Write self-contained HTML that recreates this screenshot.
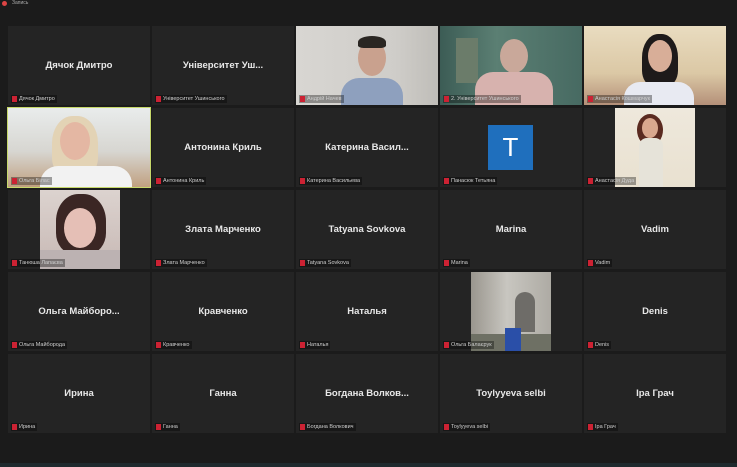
<!DOCTYPE html>
<html><head><meta charset="utf-8"><style>
*{margin:0;padding:0;box-sizing:border-box}
body{width:737px;height:467px;background:#1b1b1b;position:relative;overflow:hidden;font-family:"Liberation Sans","DejaVu Sans",sans-serif}
.t{position:absolute;width:142px;height:79px;background:#242424;overflow:hidden}
.n{position:absolute;left:0;right:0;top:34px;text-align:center;color:#e8e8e8;font-weight:bold;font-size:9.5px;white-space:nowrap}
.l{position:absolute;left:3px;bottom:2px;color:#cfcfcf;font-size:5.5px;white-space:nowrap;padding:1px 2px 1px 8px;background:rgba(0,0,0,.35)}
.l:before{content:"";position:absolute;left:1px;top:1px;width:5px;height:6px;background:#c23}
.v{position:absolute;top:0;bottom:0}
.head{position:absolute;border-radius:50%}
</style></head><body>
<div style="position:absolute;left:2px;top:1px;width:5px;height:5px;border-radius:50%;background:#d44"></div>
<div style="position:absolute;left:12px;top:0px;color:#aaa;font-size:5px">Запись</div>

<!-- row1 -->
<div class="t" style="left:8px;top:26px"><div class="n">Дячок Дмитро</div><div class="l">Дячок Дмитро</div></div>
<div class="t" style="left:152px;top:26px"><div class="n">Університет Уш...</div><div class="l">Університет Ушинського</div></div>
<div class="t" style="left:296px;top:26px;background:linear-gradient(90deg,#d8d6d2,#cfcdc9 70%,#bfbdb8)">
 <div class="head" style="left:62px;top:14px;width:28px;height:36px;background:#c9a18e"></div>
 <div class="head" style="left:62px;top:10px;width:28px;height:12px;background:#2a2622;border-radius:50% 50% 20% 20%"></div>
 <div style="position:absolute;left:45px;top:52px;width:62px;height:30px;background:#8ea0be;border-radius:18px 18px 0 0"></div>
 <div class="l">Андрій Начев</div></div>
<div class="t" style="left:440px;top:26px;background:linear-gradient(90deg,#3c5c55,#5b7f73 40%,#476a62)">
 <div style="position:absolute;left:16px;top:12px;width:22px;height:45px;background:#6b7c6a"></div>
 <div class="head" style="left:60px;top:13px;width:28px;height:34px;background:#c9a89a"></div>
 <div style="position:absolute;left:35px;top:46px;width:78px;height:36px;background:#d7b2ae;border-radius:18px 18px 0 0"></div>
 <div class="l">2. Університет Ушинського</div></div>
<div class="t" style="left:584px;top:26px;background:linear-gradient(180deg,#e9dcc0,#dbc8a5 60%,#b49079)">
 <div class="head" style="left:58px;top:8px;width:36px;height:52px;background:#1e1a1a;border-radius:45% 45% 30% 30%"></div>
 <div class="head" style="left:64px;top:14px;width:24px;height:32px;background:#d8ae98"></div>
 <div style="position:absolute;left:40px;top:56px;width:70px;height:26px;background:#e8eaf2;border-radius:16px 16px 0 0"></div>
 <div class="l">Анастасія Кошмарчук</div></div>

<!-- row2 -->
<div class="t" style="left:7px;top:107px;width:144px;height:81px;border:1.5px solid #c6d86a;background:linear-gradient(180deg,#e9ecec,#d7d6d1 55%,#c0a080)">
 <div class="head" style="left:44px;top:8px;width:46px;height:60px;background:#e3d3b5;border-radius:45% 45% 30% 30%"></div>
 <div class="head" style="left:52px;top:14px;width:30px;height:38px;background:#e4b7a3"></div>
 <div style="position:absolute;left:32px;top:58px;width:92px;height:26px;background:#f2f2f2;border-radius:18px 18px 0 0"></div>
 <div class="l">Ольга Білас</div></div>
<div class="t" style="left:152px;top:108px"><div class="n">Антонина Криль</div><div class="l">Антонина Криль</div></div>
<div class="t" style="left:296px;top:108px"><div class="n">Катерина Васил...</div><div class="l">Катерина Васильева</div></div>
<div class="t" style="left:440px;top:108px"><div style="position:absolute;left:48px;top:17px;width:45px;height:45px;background:#1f6fbd;color:#fff;font-size:26px;text-align:center;line-height:45px">T</div><div class="l">Панасюк Тетьяна</div></div>
<div class="t" style="left:584px;top:108px">
 <div class="v" style="left:31px;width:80px;background:linear-gradient(180deg,#eee8dc,#e9e1d0)">
  <div class="head" style="left:22px;top:6px;width:26px;height:32px;background:#5a2a20"></div>
  <div class="head" style="left:27px;top:10px;width:16px;height:20px;background:#d9a78e"></div>
  <div style="position:absolute;left:24px;top:30px;width:24px;height:50px;background:#e6e3d9;border-radius:8px 8px 0 0"></div>
 </div><div class="l">Анастасія Дуда</div></div>

<!-- row3 -->
<div class="t" style="left:8px;top:190px">
 <div class="v" style="left:32px;width:80px;background:linear-gradient(180deg,#dcd3cf,#c7b8b4)">
  <div class="head" style="left:16px;top:4px;width:50px;height:60px;background:#3b2624;border-radius:45% 45% 35% 35%"></div>
  <div class="head" style="left:24px;top:18px;width:32px;height:40px;background:#e5bfb6"></div>
  <div style="position:absolute;left:0;top:60px;width:80px;height:20px;background:#bcb2b2"></div>
 </div><div class="l">Танюша Лапаєва</div></div>
<div class="t" style="left:152px;top:190px"><div class="n">Злата Марченко</div><div class="l">Злата Марченко</div></div>
<div class="t" style="left:296px;top:190px"><div class="n">Tatyana Sovkova</div><div class="l">Tatyana Sovkova</div></div>
<div class="t" style="left:440px;top:190px"><div class="n">Marina</div><div class="l">Marina</div></div>
<div class="t" style="left:584px;top:190px"><div class="n">Vadim</div><div class="l">Vadim</div></div>

<!-- row4 -->
<div class="t" style="left:8px;top:272px"><div class="n">Ольга Майборо...</div><div class="l">Ольга Майборода</div></div>
<div class="t" style="left:152px;top:272px"><div class="n">Кравченко</div><div class="l">Кравченко</div></div>
<div class="t" style="left:296px;top:272px"><div class="n">Наталья</div><div class="l">Наталья</div></div>
<div class="t" style="left:440px;top:272px">
 <div class="v" style="left:31px;width:80px;background:linear-gradient(90deg,#9a968e,#c8c6c0 45%,#aeaba4)">
  <div style="position:absolute;left:44px;top:20px;width:20px;height:40px;background:#6e6c68;border-radius:10px 10px 0 0"></div>
  <div style="position:absolute;left:0;top:62px;width:80px;height:18px;background:#6e7064"></div>
  <div style="position:absolute;left:34px;top:56px;width:16px;height:24px;background:#2a4fa8"></div>
 </div><div class="l">Ольга Балаєрук</div></div>
<div class="t" style="left:584px;top:272px"><div class="n">Denis</div><div class="l">Denis</div></div>

<!-- row5 -->
<div class="t" style="left:8px;top:354px"><div class="n">Ирина</div><div class="l">Ирина</div></div>
<div class="t" style="left:152px;top:354px"><div class="n">Ганна</div><div class="l">Ганна</div></div>
<div class="t" style="left:296px;top:354px"><div class="n">Богдана Волков...</div><div class="l">Богдана Волкович</div></div>
<div class="t" style="left:440px;top:354px"><div class="n">Toylyyeva selbi</div><div class="l">Toylyyeva selbi</div></div>
<div class="t" style="left:584px;top:354px"><div class="n">Іра Грач</div><div class="l">Іра Грач</div></div>

<div style="position:absolute;left:0;top:463px;width:737px;height:4px;background:#1f2a2e"></div>
</body></html>
